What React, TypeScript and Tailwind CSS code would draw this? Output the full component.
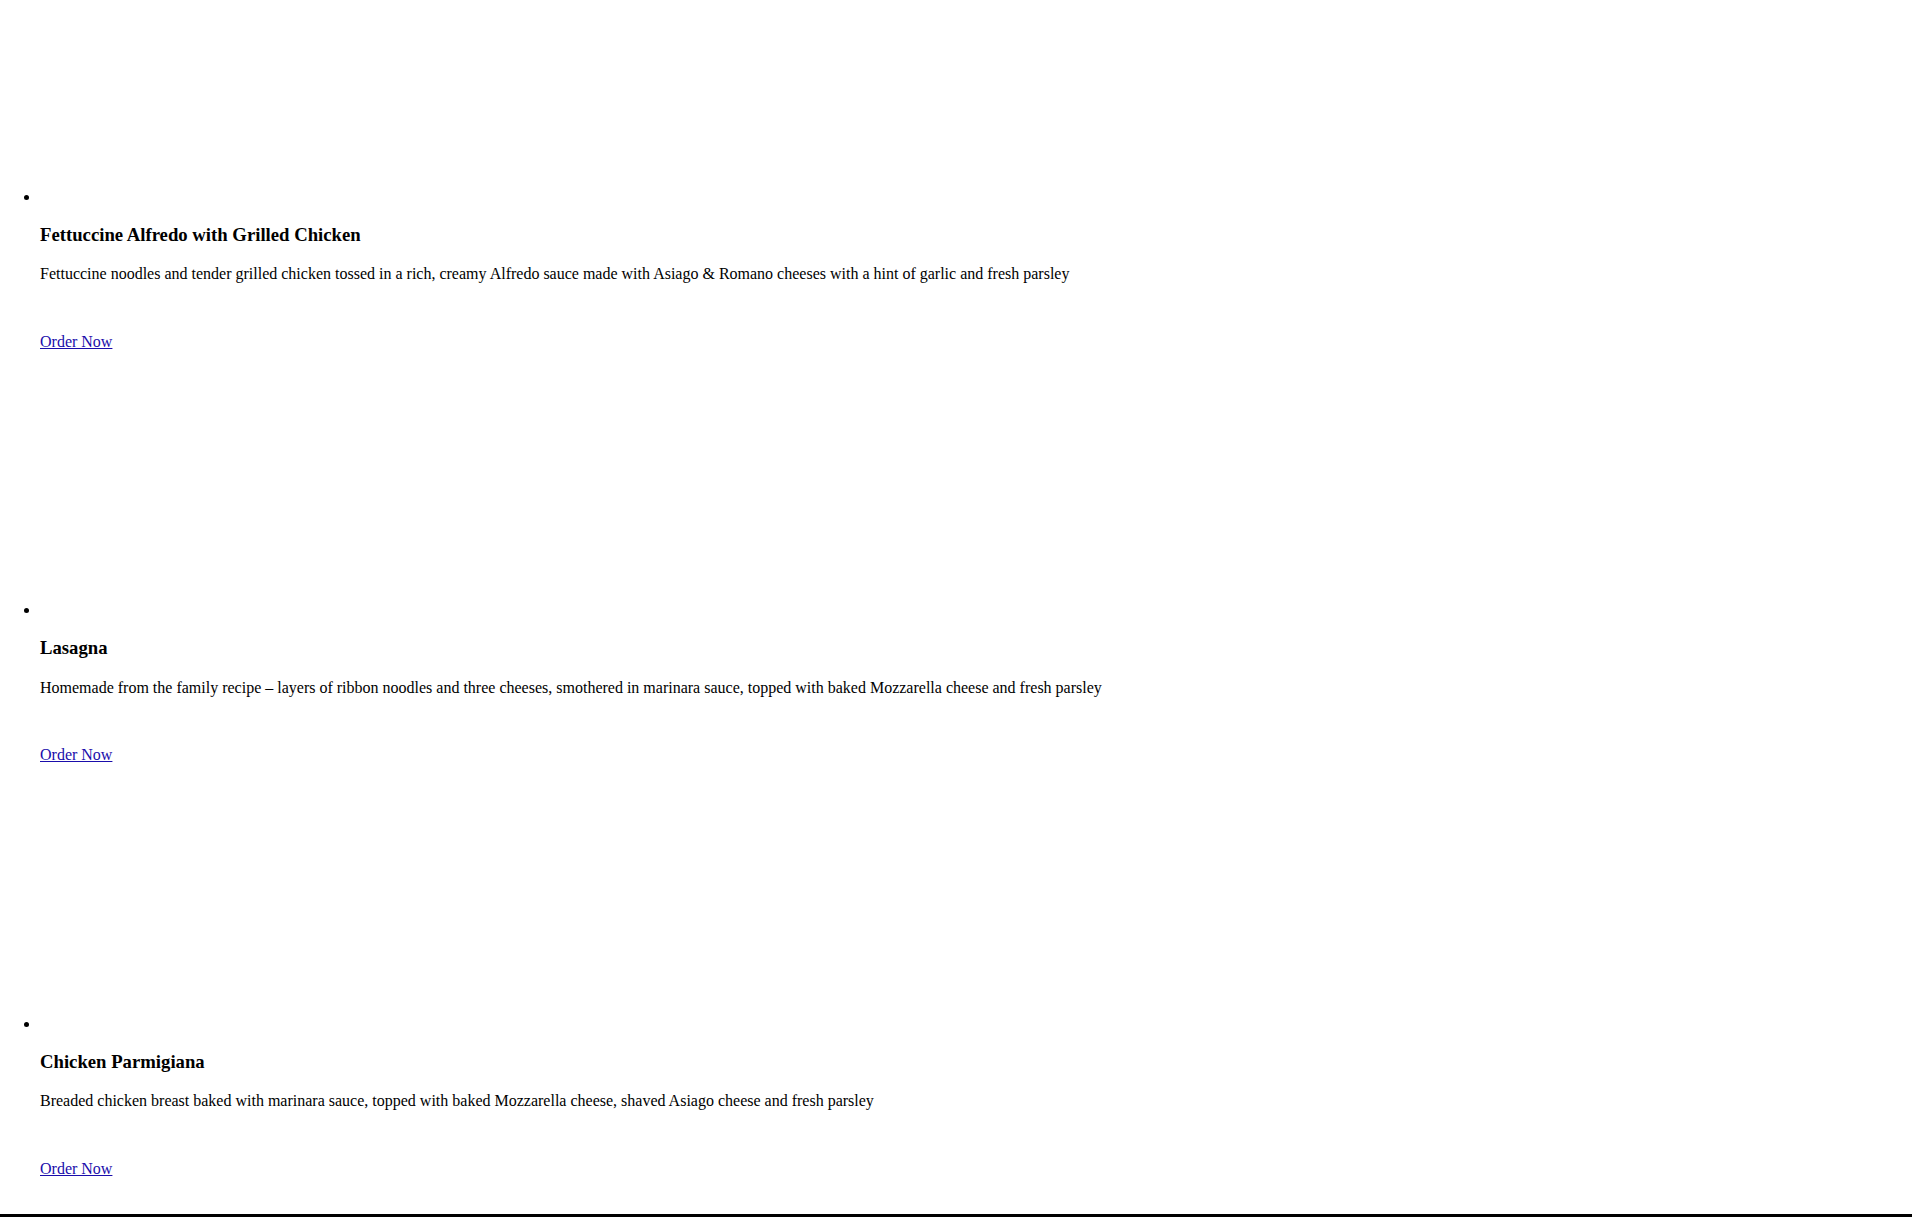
const dishes = [
  {
    name: "Fettuccine Alfredo with Grilled Chicken",
    description:
      "Fettuccine noodles and tender grilled chicken tossed in a rich, creamy Alfredo sauce made with Asiago & Romano cheeses with a hint of garlic and fresh parsley",
  },
  {
    name: "Lasagna",
    description:
      "Homemade from the family recipe – layers of ribbon noodles and three cheeses, smothered in marinara sauce, topped with baked Mozzarella cheese and fresh parsley",
  },
  {
    name: "Chicken Parmigiana",
    description:
      "Breaded chicken breast baked with marinara sauce, topped with baked Mozzarella cheese, shaved Asiago cheese and fresh parsley",
  },
];

export default function App() {
  return (
    <div className="min-h-screen bg-white text-black font-['Liberation_Serif','Times_New_Roman',serif] text-base leading-[normal]">
      <ul className="list-disc pl-10 pt-4">
        {dishes.map((dish) => (
          <li key={dish.name} className="pb-[78.3px]">
            {/* image placeholder (not loaded) */}
            <span className="inline-block h-[186px] w-0 align-baseline" />
            <h3 className="mt-[17.8px] text-[18.72px] font-bold leading-[normal]">
              {dish.name}
            </h3>
            <p className="mt-[19.6px]">{dish.description}</p>
            <p className="mt-[49.7px]">
              <a href="#" className="text-[#1a0dab] underline">
                Order Now
              </a>
            </p>
          </li>
        ))}
      </ul>
      <div className="mt-[-42px] h-[200px] bg-black" />
    </div>
  );
}
